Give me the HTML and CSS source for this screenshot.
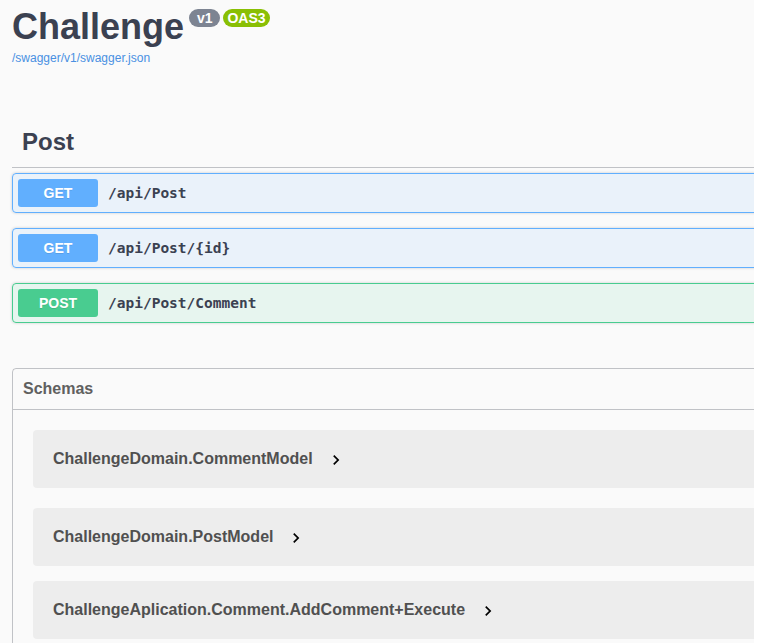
FILE: index.html
```html
<!DOCTYPE html>
<html lang="en">
<head>
<meta charset="utf-8">
<title>Challenge</title>
<link rel="stylesheet" href="styles.css">
</head>
<body>
<div class="viewport">
  <div class="wrapper">
    <div class="info">
      <div class="title-row">
        <h2 class="title">Challenge</h2>
        <span class="badge badge-version"> v1 </span>
        <span class="badge badge-oas">OAS3</span>
      </div>
      <a class="spec-link" href="#">/swagger/v1/swagger.json</a>
    </div>

    <h3 class="tag">Post</h3>

    <div class="opblocks">
      <div class="opblock opblock-get">
        <span class="method method-get">GET</span>
        <span class="path">/api/Post</span>
      </div>
      <div class="opblock opblock-get">
        <span class="method method-get">GET</span>
        <span class="path">/api/Post/{id}</span>
      </div>
      <div class="opblock opblock-post">
        <span class="method method-post">POST</span>
        <span class="path">/api/Post/Comment</span>
      </div>
    </div>

    <section class="models">
      <h4 class="models-title">Schemas</h4>
      <div class="model-list">
        <div class="model">
          <span class="model-title">ChallengeDomain.CommentModel</span>
          <svg class="chevron" width="20" height="20" viewBox="0 0 24 24"><path d="M10 6L8.59 7.41 13.17 12l-4.58 4.59L10 18l6-6z"/></svg>
        </div>
        <div class="model">
          <span class="model-title">ChallengeDomain.PostModel</span>
          <svg class="chevron" width="20" height="20" viewBox="0 0 24 24"><path d="M10 6L8.59 7.41 13.17 12l-4.58 4.59L10 18l6-6z"/></svg>
        </div>
        <div class="model">
          <span class="model-title">ChallengeAplication.Comment.AddComment+Execute</span>
          <svg class="chevron" width="20" height="20" viewBox="0 0 24 24"><path d="M10 6L8.59 7.41 13.17 12l-4.58 4.59L10 18l6-6z"/></svg>
        </div>
      </div>
    </section>
  </div>
</div>
</body>
</html>
```

FILE: styles.css
```css
html, body {
  margin: 0;
  padding: 0;
  background: #ffffff;
}

body {
  font-family: "Liberation Sans", Arial, sans-serif;
  color: #3b4151;
}

.viewport {
  width: 754px;
  height: 643px;
  overflow: hidden;
  background: #fafafa;
}

.wrapper {
  width: 1100px;
  padding: 0 0 0 12px;
  box-sizing: border-box;
}

.info {
  padding-top: 5px;
}

.title-row {
  display: flex;
  align-items: flex-start;
}

.title {
  margin: 0;
  font-size: 36px;
  line-height: 44px;
  font-weight: bold;
  color: #3b4151;
}

.badge {
  display: inline-block;
  margin-top: 4px;
  height: 18px;
  line-height: 18px;
  padding: 0 4px;
  border-radius: 57px;
  font-size: 14px;
  font-weight: bold;
  color: #ffffff;
  white-space: pre;
}

.badge-version {
  margin-left: 5px;
  background: #7d8492;
}

.badge-oas {
  margin-left: 3px;
  background: #89bf04;
}

.spec-link {
  display: block;
  margin-top: 2px;
  font-size: 12px;
  line-height: 14px;
  color: #4990e2;
  text-decoration: none;
}

.tag {
  margin: 51px 0 0;
  padding: 10px 20px 10px 10px;
  font-size: 24px;
  line-height: 31px;
  font-weight: bold;
  color: #3b4151;
  border-bottom: 1px solid rgba(59, 65, 81, 0.3);
}

.opblocks {
  display: flex;
  flex-direction: column;
  gap: 15px;
  margin-top: 5px;
}

.opblock {
  display: flex;
  align-items: center;
  padding: 5px;
  border: 1px solid;
  border-radius: 4px;
  box-shadow: 0 0 3px rgba(0, 0, 0, 0.19);
}

.opblock-get {
  background: rgba(97, 175, 254, 0.1);
  border-color: #61affe;
}

.opblock-post {
  background: rgba(73, 204, 144, 0.1);
  border-color: #49cc90;
}

.method {
  display: inline-block;
  min-width: 80px;
  height: 28px;
  line-height: 28px;
  text-align: center;
  border-radius: 3px;
  font-size: 14px;
  font-weight: bold;
  color: #ffffff;
  text-shadow: 0 1px 0 rgba(0, 0, 0, 0.1);
}

.method-get {
  background: #61affe;
}

.method-post {
  background: #49cc90;
}

.path {
  padding: 0 10px;
  font-family: "DejaVu Sans Mono", monospace;
  font-size: 14.5px;
  font-weight: bold;
  color: #3b4151;
}

.models {
  margin-top: 45px;
  border: 1px solid rgba(59, 65, 81, 0.3);
  border-radius: 4px;
}

.models-title {
  margin: 0;
  padding: 10px 20px 10px 10px;
  font-size: 16px;
  line-height: 20px;
  font-weight: bold;
  color: #606060;
  border-bottom: 1px solid rgba(59, 65, 81, 0.3);
}

.model-list {
  padding: 20px 20px 20px;
}

.model {
  display: flex;
  align-items: center;
  height: 58px;
  padding-left: 20px;
  margin-bottom: 15px;
  background: rgba(0, 0, 0, 0.05);
  border-radius: 4px;
}

.model:first-child {
  margin-bottom: 20px;
}

.model-title {
  font-size: 16px;
  font-weight: bold;
  color: #505050;
}

.chevron {
  margin-left: 13px;
  margin-top: 2px;
  fill: #000000;
}
```
